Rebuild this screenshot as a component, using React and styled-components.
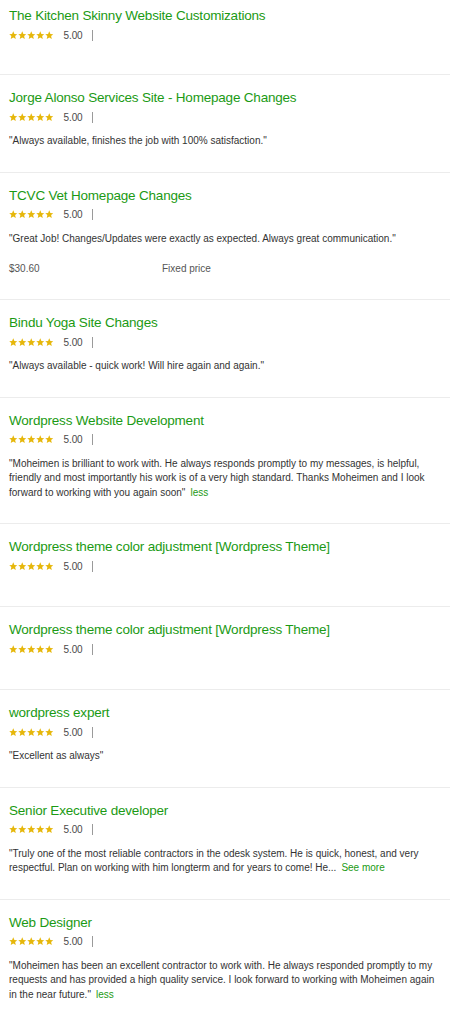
import React from "react";
import styled, { createGlobalStyle } from "styled-components";

const Global = createGlobalStyle`
  html, body { margin: 0; padding: 0; background: #fff; }
  body { font-family: "Liberation Sans", Arial, sans-serif; -webkit-font-smoothing: antialiased; }
`;

const List = styled.div`
  display: flex;
  flex-direction: column;
  width: 450px;
`;

const Item = styled.section`
  padding: ${(p) => (p.$first ? "6px 9px 22px" : "13px 9px 23px")};
  border-top: ${(p) => (p.$first ? "none" : "1px solid #ececec")};
`;

const Title = styled.h4`
  margin: 0;
  font-size: 13.5px;
  letter-spacing: -0.2px;
  line-height: 20px;
  font-weight: 400;
  color: #1b9a14;
`;

const RatingRow = styled.div`
  display: flex;
  align-items: center;
  height: 14px;
  margin: 2px 0 10px;
`;

const Stars = styled.div`
  display: flex;
  gap: 0.5px;
`;

const Score = styled.span`
  margin-left: 10px;
  font-size: 10px;
  letter-spacing: -0.1px;
  color: #4a4a4a;
`;

const Sep = styled.span`
  width: 1px;
  height: 11px;
  background: #9a9a9a;
  margin-left: 9px;
`;

const Quote = styled.p`
  margin: 0;
  font-size: 10px;
  line-height: 14.5px;
  color: #333;
`;

const More = styled.span`
  color: #1b9a14;
  margin-left: 5px;
`;

const PriceRow = styled.div`
  display: grid;
  grid-template-columns: 153px 1fr;
  margin-top: 15px;
  font-size: 10px;
  line-height: 15px;
  color: #555;
`;

const Star = () => (
  <svg width="8.5" height="8.5" viewBox="0 0 24 24">
    <path
      fill="#e6b70b"
      d="M12 0.8l3.3 7.4 8 .8-6 5.4 1.8 7.9L12 18.2l-7.1 4.1 1.8-7.9-6-5.4 8-.8z"
    />
  </svg>
);

const reviews = [
  { title: "The Kitchen Skinny Website Customizations" },
  {
    title: "Jorge Alonso Services Site - Homepage Changes",
    quote: '"Always available, finishes the job with 100% satisfaction."',
  },
  {
    title: "TCVC Vet Homepage Changes",
    quote:
      '"Great Job! Changes/Updates were exactly as expected. Always great communication."',
    price: "$30.60",
    type: "Fixed price",
  },
  {
    title: "Bindu Yoga Site Changes",
    quote: '"Always available - quick work! Will hire again and again."',
  },
  {
    title: "Wordpress Website Development",
    quote:
      '"Moheimen is brilliant to work with. He always responds promptly to my messages, is helpful, friendly and most importantly his work is of a very high standard. Thanks Moheimen and I look forward to working with you again soon"',
    more: "less",
  },
  { title: "Wordpress theme color adjustment [Wordpress Theme]" },
  { title: "Wordpress theme color adjustment [Wordpress Theme]" },
  { title: "wordpress expert", quote: '"Excellent as always"' },
  {
    title: "Senior Executive developer",
    quote:
      '"Truly one of the most reliable contractors in the odesk system. He is quick, honest, and very respectful. Plan on working with him longterm and for years to come! He...',
    more: "See more",
  },
  {
    title: "Web Designer",
    quote:
      '"Moheimen has been an excellent contractor to work with. He always responded promptly to my requests and has provided a high quality service. I look forward to working with Moheimen again in the near future."',
    more: "less",
  },
];

export default function App() {
  return (
    <>
      <Global />
      <List>
        {reviews.map((r, i) => (
          <Item key={i} $first={i === 0}>
            <Title>{r.title}</Title>
            <RatingRow>
              <Stars>
                {[0, 1, 2, 3, 4].map((s) => (
                  <Star key={s} />
                ))}
              </Stars>
              <Score>5.00</Score>
              <Sep />
            </RatingRow>
            {r.quote && (
              <Quote>
                {r.quote}
                {r.more && <More>{r.more}</More>}
              </Quote>
            )}
            {r.price && (
              <PriceRow>
                <span>{r.price}</span>
                <span>{r.type}</span>
              </PriceRow>
            )}
          </Item>
        ))}
      </List>
    </>
  );
}
